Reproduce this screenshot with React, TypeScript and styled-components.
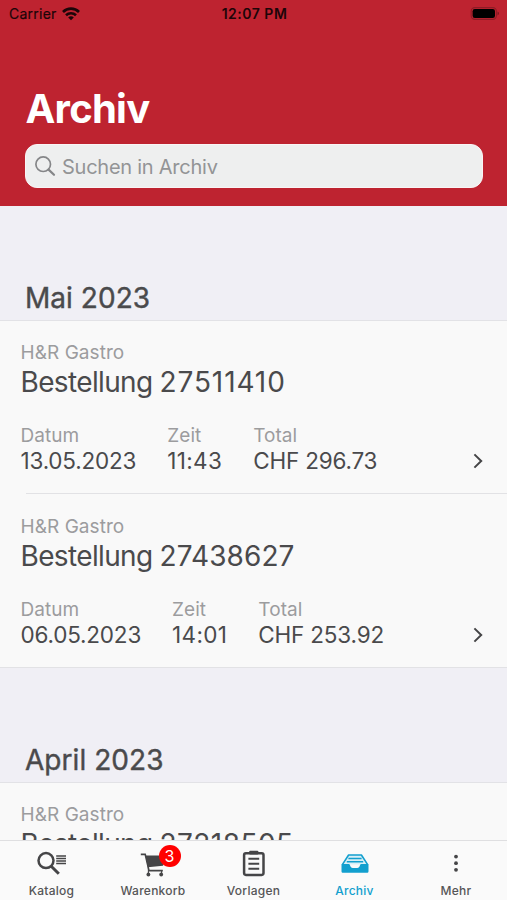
import React from "react";
import styled, { createGlobalStyle } from "styled-components";

const GlobalStyle = createGlobalStyle`
  * { box-sizing: border-box; }
  html, body { margin: 0; padding: 0; }
  body {
    font-family: Inter, "Liberation Sans", sans-serif;
    color: #4a4a4c;
    background: #f0eff5;
    -webkit-font-smoothing: antialiased;
  }
`;

const Screen = styled.main`
  width: 507px;
  height: 900px;
  display: flex;
  flex-direction: column;
  overflow: hidden;
`;

const Header = styled.header`
  flex: none;
  height: 206px;
  background: #be2330;
  display: flex;
  flex-direction: column;
`;

const StatusBar = styled.div`
  display: grid;
  grid-template-columns: 1fr auto 1fr;
  align-items: center;
  height: 27px;
  padding: 0 7px 0 9px;
  font-size: 14px;
  line-height: 27px;
  color: #1c0508;
`;

const Carrier = styled.div`
  display: flex;
  align-items: center;
  gap: 5px;
  letter-spacing: 0.25px;
  font-weight: 400;
  -webkit-text-stroke: 0.2px currentColor;
`;

const Clock = styled.div`
  font-weight: 600;
  letter-spacing: 0.5px;
`;

const BatterySlot = styled.div`
  display: flex;
  justify-content: flex-end;
`;

const Title = styled.h1`
  margin: 58px 0 0 25.5px;
  font-size: 40px;
  line-height: 48px;
  font-weight: 700;
  letter-spacing: -0.75px;
  color: #fff;
`;

const Search = styled.label`
  display: flex;
  align-items: center;
  gap: 6px;
  height: 44px;
  margin: 11px 24.5px 0 25px;
  padding: 0 9px;
  border-radius: 12px;
  background: #eeefef;
  border: 1px solid #faf4f5;
`;

const SearchInput = styled.input`
  flex: 1;
  min-width: 0;
  height: 28px;
  border: 0;
  padding: 1px 0 0;
  outline: 0;
  background: transparent;
  font: 400 20px/28px Inter, "Liberation Sans", sans-serif;
  letter-spacing: -0.25px;
  color: #4a4a4c;
  &::placeholder { color: #939496; opacity: 1; }
`;

const Content = styled.div`
  flex: 1;
  min-height: 0;
  overflow: hidden;
`;

const Month = styled.h2`
  margin: 0;
  height: 114px;
  padding: 72px 0 0 25px;
  font-size: 28px;
  line-height: 40px;
  font-weight: 400;
  letter-spacing: 0.05px;
  -webkit-text-stroke: 0.4px currentColor;
`;

const Orders = styled.ul`
  margin: 0;
  padding: 0;
  list-style: none;
  background: #f9f9f9;
  box-shadow: inset 0 1px #e2e2e6;
`;

const Order = styled.li`
  display: flex;
  flex-direction: column;
  height: 174px;
  padding: 20px 0 0 20.5px;
  background: linear-gradient(#e2e2e5, #e2e2e5) 26px 100% / 100% 1px no-repeat;
  &:last-child { background-position: 0 100%; }
`;

const Caption = styled.div`
  font-size: 19px;
  line-height: 24px;
  padding-top: 1px;
  height: 24px;
  letter-spacing: 0.05px;
  color: #9c9c9e;
`;

const OrderName = styled.div`
  display: flex;
  gap: 7px;
  font-size: 28px;
  line-height: 36px;
  letter-spacing: -0.65px;
`;

const OrderNumber = styled.span<{ $tracking: number }>`
  letter-spacing: ${(p) => p.$tracking}px;
`;

const Facts = styled.div`
  display: flex;
  align-items: flex-end;
  gap: 31px;
  padding: 23px 24px 0 0;
`;

const Value = styled.div<{ $wide?: boolean }>`
  font-size: 22.5px;
  line-height: 28px;
  letter-spacing: ${(p) => (p.$wide ? "0.35px" : "-0.2px")};
`;

const Chevron = styled.svg`
  margin: 0 0 6.5px auto;
`;

const TabBar = styled.nav`
  flex: none;
  height: 60px;
  display: grid;
  grid-template-columns: 103px 100px 101px 101px 102px;
  background: #fafafa;
  border-top: 1px solid #dfdfe1;
`;

const Tab = styled.a<{ $active?: boolean }>`
  display: flex;
  flex-direction: column;
  align-items: center;
  padding-top: 5px;
  font-size: 12px;
  line-height: 18px;
  font-weight: 500;
  letter-spacing: 0.25px;
  color: ${(p) => (p.$active ? "#129fce" : "#555557")};
`;

const TabIcon = styled.span`
  position: relative;
  display: block;
  width: 36px;
  height: 36px;
  color: #454547;
  svg { display: block; }
`;

const Badge = styled.span`
  position: absolute;
  left: 23.500px;
  top: -1px;
  width: 22px;
  height: 22px;
  border-radius: 50%;
  background: #ff0000;
  color: #fff;
  font-size: 16px;
  line-height: 22px;
  font-weight: 400;
  letter-spacing: 0;
  text-align: center;
`;

const WifiIcon = () => (
  <svg width="18" height="14" viewBox="0 0 18 14" fill="none" stroke="currentColor" strokeWidth="2.6">
    <path d="M1 5C5.4.5 12.6.5 17 5" />
    <path d="M4 8.2c2.8-2.7 7.2-2.7 10 0" />
    <path d="M9 13.2 6.2 10.4c1.6-1.4 4-1.4 5.6 0z" fill="currentColor" stroke="none" />
  </svg>
);

const BatteryIcon = () => (
  <svg width="30" height="13" viewBox="0 0 30 13">
    <rect x="1.2" y=".6" width="25.2" height="11.8" rx="3.6" fill="none" stroke="#8e1c26" strokeWidth="1.1" />
    <rect x="2.6" y="2" width="22.4" height="9" rx="2.2" fill="#000" />
    <path d="M27.6 4.6c1.6.5 1.6 3.3 0 3.8z" fill="#6a141c" />
  </svg>
);

const SearchIcon = () => (
  <svg width="21" height="21" viewBox="0 0 21 21" fill="none" stroke="#858688" strokeWidth="1.7" strokeLinecap="round">
    <circle cx="8.2" cy="8.2" r="7.3" />
    <path d="m13.6 13.6 5.4 5.2" strokeWidth="2.2" />
  </svg>
);

const CatalogIcon = () => (
  <svg width="36" height="36" viewBox="0 0 36 36" fill="none" stroke="currentColor">
    <circle cx="12" cy="14.6" r="7.5" strokeWidth="2.5" />
    <path d="m17.2 20.2 7.6 7.6" strokeWidth="3" />
    <path d="M22.2 10h9.8M22.2 12.5h9.8M22.2 15h9.8M22.2 17.5h9.8" strokeWidth="1.3" />
  </svg>
);

const CartIcon = () => (
  <svg width="36" height="36" viewBox="0 0 36 36" fill="none" stroke="currentColor">
    <path d="M5.8 8.4h4.4l3.8 16.2h13.8" strokeWidth="1.6" />
    <path d="M10.4 9.6H31l-3 10.2-15.2 1.4z" fill="currentColor" stroke="none" />
    <path d="M13.4 21v6.4M26.6 24v3.4" strokeWidth="1.1" />
    <circle cx="13.4" cy="28.5" r="1.9" fill="currentColor" stroke="none" />
    <circle cx="26.2" cy="28.5" r="1.9" fill="currentColor" stroke="none" />
  </svg>
);

const ClipboardIcon = () => (
  <svg width="36" height="36" viewBox="0 0 36 36" fill="none" stroke="currentColor">
    <rect x="8.1" y="7.3" width="19.4" height="21.6" rx="1.8" strokeWidth="2.5" />
    <rect x="13.2" y="4.7" width="9.200" height="3.800" rx="1" fill="currentColor" stroke="none" />
    <path d="M12.4 12.7h10.8M12.4 17.7h10.8M12.4 22.7h10.8" strokeWidth="1.9" />
  </svg>
);

const ArchiveIcon = () => (
  <svg width="36" height="36" viewBox="0 0 36 36" fill="none" stroke="#129fce">
    <path d="M5.5 18.4 11.6 9h12.8l6.1 9.4" strokeWidth="1.6" fill="#d9eff7" strokeLinejoin="round" />
    <path d="M11.4 12.5h13.2M9.8 15.8h16.4" strokeWidth="1.5" />
    <path d="M4.5 18h7.1c1 0 1.2.6 1.5 1.5.5 1.5 1.2 2.4 2.6 2.4h4.6c1.4 0 2.1-.9 2.6-2.4.3-.9.5-1.5 1.5-1.5h7.1v7.2c0 1-.7 1.6-1.6 1.6H6.1c-.9 0-1.6-.6-1.6-1.6z" fill="#129fce" stroke="none" />
  </svg>
);

const MoreIcon = () => (
  <svg width="36" height="36" viewBox="0 0 36 36" fill="currentColor">
    <circle cx="18" cy="10.6" r="1.9" />
    <circle cx="18" cy="17.2" r="1.9" />
    <circle cx="18" cy="23.8" r="1.9" />
  </svg>
);

type OrderData = { supplier: string; id: string; tracking: number; date: string; time: string; total: string };

const months: { name: string; orders: OrderData[] }[] = [
  {
    name: "Mai 2023",
    orders: [
      { supplier: "H&R Gastro", id: "27511410", tracking: 0.9, date: "13.05.2023", time: "11:43", total: "CHF 296.73" },
      { supplier: "H&R Gastro", id: "27438627", tracking: 0.1, date: "06.05.2023", time: "14:01", total: "CHF 253.92" },
    ],
  },
  {
    name: "April 2023",
    orders: [{ supplier: "H&R Gastro", id: "27218505", tracking: 0.45, date: "22.04.2023", time: "10:27", total: "CHF 248.15" }],
  },
];

const tabs = [
  { label: "Katalog", icon: <CatalogIcon /> },
  { label: "Warenkorb", icon: <CartIcon />, badge: 3 },
  { label: "Vorlagen", icon: <ClipboardIcon /> },
  { label: "Archiv", icon: <ArchiveIcon />, active: true },
  { label: "Mehr", icon: <MoreIcon /> },
];

const Fact = ({ label, value, wide }: { label: string; value: string; wide?: boolean }) => (
  <div>
    <Caption>{label}</Caption>
    <Value $wide={wide}>{value}</Value>
  </div>
);

export default function App() {
  return (
    <Screen>
      <GlobalStyle />
      <Header>
        <StatusBar>
          <Carrier>
            Carrier
            <WifiIcon />
          </Carrier>
          <Clock>12:07 PM</Clock>
          <BatterySlot>
            <BatteryIcon />
          </BatterySlot>
        </StatusBar>
        <Title>Archiv</Title>
        <Search>
          <SearchIcon />
          <SearchInput placeholder="Suchen in Archiv" />
        </Search>
      </Header>
      <Content>
        {months.map((month) => (
          <section key={month.name}>
            <Month>{month.name}</Month>
            <Orders>
              {month.orders.map((order) => (
                <Order key={order.id}>
                  <Caption>{order.supplier}</Caption>
                  <OrderName>
                    <span>Bestellung</span>
                    <OrderNumber $tracking={order.tracking}>{order.id}</OrderNumber>
                  </OrderName>
                  <Facts>
                    <Fact label="Datum" value={order.date} />
                    <Fact label="Zeit" value={order.time} wide />
                    <Fact label="Total" value={order.total} />
                    <Chevron width="10" height="16" viewBox="0 0 10 16" fill="none" stroke="#454547" strokeWidth="2">
                      <path d="m1.4 1.4 6.8 6.6-6.8 6.6" />
                    </Chevron>
                  </Facts>
                </Order>
              ))}
            </Orders>
          </section>
        ))}
      </Content>
      <TabBar>
        {tabs.map((tab) => (
          <Tab key={tab.label} $active={tab.active}>
            <TabIcon>
              {tab.icon}
              {tab.badge && <Badge>{tab.badge}</Badge>}
            </TabIcon>
            {tab.label}
          </Tab>
        ))}
      </TabBar>
    </Screen>
  );
}
